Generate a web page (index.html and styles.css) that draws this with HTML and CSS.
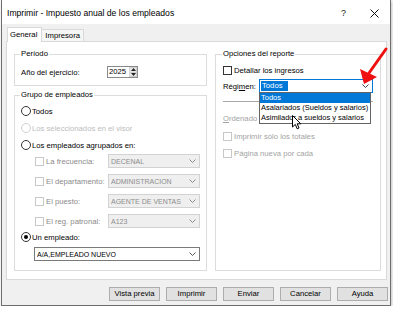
FILE: index.html
```html
<!DOCTYPE html>
<html lang="es">
<head>
    <meta charset="UTF-8">
    <title>Imprimir - Impuesto anual de los empleados</title>
    <link rel="stylesheet" href="styles.css">
</head>
<body>
<div class="window">
    <!-- barra de titulo -->
    <div class="titlebar">
        <span class="title">Imprimir - Impuesto anual de los empleados</span>
        <span class="help">?</span>
        <span class="close">
            <svg width="9" height="9" viewBox="0 0 9 9"><path d="M0.5 0.5 L8.5 8.5 M8.5 0.5 L0.5 8.5" stroke="#111" stroke-width="1" fill="none"/></svg>
        </span>
    </div>

    <div class="tabs">
        <div class="tab active">General</div>
        <div class="tab">Impresora</div>
    </div>

    <div class="panel">
        <div class="col-left">
            <fieldset class="group periodo">
                <legend>Período</legend>
                <div class="opt">
                    <span class="year-label">Año del ejercicio:</span>
                    <div class="spin">
                        <span class="spin-value">2025</span>
                        <div class="spin-btns">
                            <i><svg width="5" height="3" viewBox="0 0 5 3"><path d="M0 3 L2.5 0 L5 3 Z" fill="#222"/></svg></i>
                            <i><svg width="5" height="3" viewBox="0 0 5 3"><path d="M0 0 L2.5 3 L5 0 Z" fill="#222"/></svg></i>
                        </div>
                    </div>
                </div>
            </fieldset>

            <fieldset class="group grupo">
                <legend>Grupo de empleados</legend>
                <div class="opt first"><span class="radio"></span>Todos</div>
                <div class="opt gap5 faint"><span class="radio off"></span>Los seleccionados en el visor</div>
                <div class="opt gap5"><span class="radio"></span>Los empleados agrupados en:</div>

                <div class="sub top3">
                    <span class="sub-label"><span class="check off"></span>La frecuencia:</span>
                    <div class="combo off"><span>DECENAL</span><svg width="7" height="4" viewBox="0 0 7 4"><polyline points="0.5,0.5 3.5,3.5 6.5,0.5" stroke="#8a8a8a" fill="none"/></svg></div>
                </div>
                <div class="sub">
                    <span class="sub-label"><span class="check off"></span>El departamento:</span>
                    <div class="combo off"><span>ADMINISTRACION</span><svg width="7" height="4" viewBox="0 0 7 4"><polyline points="0.5,0.5 3.5,3.5 6.5,0.5" stroke="#8a8a8a" fill="none"/></svg></div>
                </div>
                <div class="sub">
                    <span class="sub-label"><span class="check off"></span>El puesto:</span>
                    <div class="combo off"><span>AGENTE DE VENTAS</span><svg width="7" height="4" viewBox="0 0 7 4"><polyline points="0.5,0.5 3.5,3.5 6.5,0.5" stroke="#8a8a8a" fill="none"/></svg></div>
                </div>
                <div class="sub">
                    <span class="sub-label"><span class="check off"></span>El reg. patronal:</span>
                    <div class="combo off"><span>A123</span><svg width="7" height="4" viewBox="0 0 7 4"><polyline points="0.5,0.5 3.5,3.5 6.5,0.5" stroke="#8a8a8a" fill="none"/></svg></div>
                </div>

                <div class="opt top3"><span class="radio checked"></span>Un empleado:</div>
                <div class="combo employee"><span>A/A,EMPLEADO NUEVO</span><svg width="7" height="4" viewBox="0 0 7 4"><polyline points="0.5,0.5 3.5,3.5 6.5,0.5" stroke="#555" fill="none"/></svg></div>
            </fieldset>
        </div>

        <div class="col-right">
            <fieldset class="group opciones">
                <legend>Opciones del reporte</legend>
                <div class="opt first"><span class="check"></span>Detallar los ingresos</div>
                <div class="regimen">
                    <span class="regimen-label">Régi<u>m</u>en:</span>
                    <div class="combo focus"><span><b class="sel">Todos</b></span><svg width="7" height="4" viewBox="0 0 7 4"><polyline points="0.5,0.5 3.5,3.5 6.5,0.5" stroke="#444" fill="none"/></svg></div>
                </div>
                <div class="sep"></div>
                <div class="opt ordenado faint2"><u>O</u>rdenado</div>
                <div class="opt gap6 faint2"><span class="check off"></span>Imprimir sólo los totales</div>
                <div class="opt gap5 faint2"><span class="check off"></span>Página nueva por cada</div>
            </fieldset>
        </div>
    </div>

    <div class="buttons">
        <div class="btn">Vista previa</div>
        <div class="btn">Imprimir</div>
        <div class="btn">Enviar</div>
        <div class="btn">Cancelar</div>
        <div class="btn">Ayuda</div>
    </div>

    <!-- lista desplegable abierta -->
    <ul class="dropdown">
        <li class="selected">Todos</li>
        <li>Asalariados (Sueldos y salarios)</li>
        <li>Asimilador a sueldos y salarios</li>
    </ul>

    <svg class="red-arrow" width="34" height="42" viewBox="0 0 34 42">
        <line x1="28" y1="3" x2="11" y2="27" stroke="#f01010" stroke-width="3" stroke-linecap="round"/>
        <path d="M6 38 L2 23 L19 31 Z" fill="#f01010"/>
    </svg>

    <svg class="cursor" width="10" height="15" viewBox="0 0 10 15">
        <path d="M0.5 0.5 L0.5 12 L3.3 9.4 L5.2 13.8 L7 13 L5.2 8.8 L8.8 8.8 Z" fill="#fff" stroke="#000" stroke-width="1" stroke-linejoin="round"/>
    </svg>
</div>
</body>
</html>
```

FILE: styles.css
```css
body {
    margin: 0;
    background: #ffffff;
    font-family: "Liberation Sans", Arial, sans-serif;
    font-size: 7.7px;
    color: #000;
}

.window {
    position: relative;
    box-sizing: border-box;
    width: 390px;
    height: 306px;
    margin-left: 1px;
    background: #f0f0f0;
    border: 1px solid #6e6e6e;
    border-top: none;
    box-shadow: 1px 1px 3px rgba(0, 0, 0, 0.25);
}

/* barra de titulo */
.titlebar {
    display: flex;
    align-items: center;
    box-sizing: border-box;
    height: 24px;
    padding: 2px 0 0 5px;
    background: #fff;
}

.title {
    flex: 1;
    font-size: 8.6px;
}

.help, .close {
    width: 31px;
    text-align: center;
}

.help {
    font-size: 9px;
    color: #222;
}

.close svg {
    display: block;
    margin: 0 auto;
}

/* pestañas */
.tabs {
    display: flex;
    align-items: flex-end;
    height: 17px;
    padding-left: 5px;
}

.tab {
    box-sizing: border-box;
    height: 12px;
    padding: 0 3px;
    line-height: 11px;
    border: 1px solid #d9d9d9;
    border-bottom: none;
    background: #f6f6f6;
}

.tab.active {
    position: relative;
    z-index: 1;
    height: 15px;
    margin-bottom: -1px;
    padding: 0 4px 0 2px;
    line-height: 14px;
    background: #fff;
}

.tab + .tab {
    margin-left: -1px;
}

.panel {
    display: flex;
    gap: 8px;
    box-sizing: border-box;
    height: 239px;
    margin: 0 3px 0 4px;
    padding: 7px 5px 8px 7px;
    background: #fff;
    border: 1px solid #d9d9d9;
}

.col-left {
    display: flex;
    flex-direction: column;
    width: 193px;
}

.col-right {
    display: flex;
    flex: 1;
}

/* group box */
.group {
    margin: 0;
    padding: 0 6px;
    border: 1px solid #dcdcdc;
    min-width: 0;
}

.group legend {
    padding: 0 1px;
    margin-left: -1px;
    line-height: 10px;
}

.periodo {
    padding: 7px 6px 7px;
}

.grupo {
    flex: 1;
    margin-top: 4px;
}

.opciones {
    flex: 1;
    padding: 0 7px;
}

.opt {
    display: flex;
    align-items: center;
    height: 12px;
    white-space: nowrap;
}

.opt.first { margin-top: 5px; }
.gap5 { margin-top: 5px; }
.gap6 { margin-top: 6px; }
.top3 { margin-top: 3px !important; }

.faint { color: #bdbdbd; }
.faint2 { color: #a3a3a3; }

.year-label {
    width: 86px;
}

.spin {
    display: flex;
    box-sizing: border-box;
    width: 31px;
    height: 12px;
    border: 1px solid #8a8a8a;
    background: #fff;
}

.spin-value {
    flex: 1;
    padding-left: 1px;
    line-height: 10px;
}

.spin-btns {
    display: flex;
    flex-direction: column;
    width: 9px;
}

.spin-btns i {
    display: flex;
    flex: 1;
    align-items: center;
    justify-content: center;
    background: #e8e8e8;
    border: 1px solid #d0d0d0;
    margin: 0 0 0 1px;
}

.spin-btns i + i {
    border-top: none;
}

.radio {
    display: flex;
    align-items: center;
    justify-content: center;
    box-sizing: border-box;
    width: 10px;
    height: 10px;
    margin-right: 1px;
    border: 1px solid #333;
    border-radius: 50%;
    background: #fff;
}

.radio.off {
    border-color: #cfcfcf;
}

.radio.checked::after {
    content: "";
    width: 4px;
    height: 4px;
    border-radius: 50%;
    background: #000;
}

.check {
    box-sizing: border-box;
    width: 9px;
    height: 9px;
    margin-right: 2px;
    border: 1px solid #333;
    background: #fff;
}

.check.off {
    border-color: #c8c8c8;
}

/* combos */
.combo {
    display: flex;
    align-items: center;
    box-sizing: border-box;
    height: 14px;
    padding-left: 2px;
    border: 1px solid #7a7a7a;
    background: #fff;
    font-size: 7px;
    white-space: nowrap;
}

.combo span {
    flex: 1;
    overflow: hidden;
}

.combo svg {
    margin-right: 3px;
}

.combo.off {
    border-color: #d2d2d2;
    background: #efefef;
    color: #8d8d8d;
}

.combo.focus {
    flex: 1;
    padding-left: 1px;
    border-color: #0078d7;
    font-size: 7.7px;
}

.sel {
    display: inline-block;
    padding: 0 5px 0 1px;
    line-height: 10px;
    font-weight: normal;
    color: #fff;
    background: #0078d7;
}

.sub {
    display: flex;
    align-items: center;
    height: 14px;
    margin-top: 6px;
    padding-left: 14px;
}

.sub-label {
    display: flex;
    align-items: center;
    width: 73px;
    color: #8a8a8a;
    white-space: nowrap;
}

.sub .combo {
    flex: 1;
}

.combo.employee {
    margin: 4px 0 0 13px;
}

.regimen {
    display: flex;
    align-items: center;
    height: 14px;
    margin-top: 3px;
}

.regimen-label {
    width: 36px;
}

.sep {
    margin-top: 8px;
    border-top: 1px solid #a8a8a8;
}

.ordenado {
    margin-top: 10px;
}

/* botones */
.buttons {
    display: flex;
    justify-content: flex-end;
    gap: 6px;
    padding: 7px 2px 0 0;
}

.btn {
    box-sizing: border-box;
    width: 51px;
    height: 14px;
    border: 1px solid #adadad;
    background: #e1e1e1;
    line-height: 12px;
    text-align: center;
}

/* capas encima */
.dropdown {
    position: absolute;
    left: 257px;
    top: 92px;
    box-sizing: border-box;
    width: 112px;
    margin: 0;
    padding: 0;
    list-style: none;
    border: 1px solid #646464;
    background: #fff;
    font-size: 7.5px;
}

.dropdown li {
    padding-left: 1px;
    line-height: 10px;
    white-space: nowrap;
}

.dropdown li.selected {
    color: #fff;
    background: #0078d7;
}

.red-arrow {
    position: absolute;
    left: 356px;
    top: 46px;
}

.cursor {
    position: absolute;
    left: 290px;
    top: 115px;
}
```
